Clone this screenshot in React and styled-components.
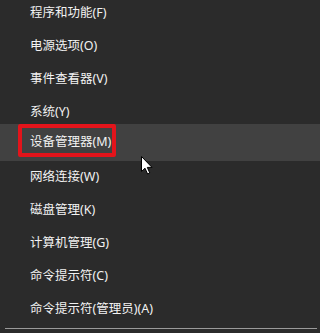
import React from "react";
import styled, { createGlobalStyle } from "styled-components";

const Global = createGlobalStyle`
  html, body { margin: 0; padding: 0; background: #2b2b2b; }
  body { overflow: hidden; }
`;

const Menu = styled.div`
  position: relative;
  width: 100%;
  height: 333px;
  background: #2b2b2b;
  display: flex;
  flex-direction: column;
  overflow: hidden;
  font-family: "Noto Sans", "Noto Sans CJK SC", sans-serif;
`;

const List = styled.ul`
  list-style: none;
  margin: -3px 0 0 0;
  padding: 0;
  display: flex;
  flex-direction: column;
`;

const Item = styled.li`
  height: ${(p) => (p.$hover ? 37 : 33)}px;
  margin-top: ${(p) => (p.$hover ? -5 : 0)}px;
  display: flex;
  align-items: ${(p) => (p.$hover ? "flex-start" : "center")};
  padding-left: ${(p) => (p.$hover ? 18 : 30)}px;
  background: ${(p) => (p.$hover ? "#414141" : "transparent")};
`;

const Label = styled.span`
  color: #f2f2f2;
  font-size: 12.5px;
  white-space: nowrap;
  line-height: 1;
`;

const Boxed = styled(Label)`
  display: flex;
  align-items: center;
  box-sizing: border-box;
  width: 98px;
  height: 33px;
  padding: 3px 0 0 8px;
  border: 4px solid #e3141b;
  border-radius: 2px;
`;

const Separator = styled.div`
  height: 1px;
  margin: 2px 3px 0 5px;
  background: #9a9a9a;
`;

const Cursor = styled.svg`
  position: absolute;
  left: 141px;
  top: 156px;
`;

const items = [
  "程序和功能(F)",
  "电源选项(O)",
  "事件查看器(V)",
  "系统(Y)",
  "设备管理器(M)",
  "网络连接(W)",
  "磁盘管理(K)",
  "计算机管理(G)",
  "命令提示符(C)",
  "命令提示符(管理员)(A)",
];

export default function App() {
  return (
    <>
      <Global />
      <Menu>
        <List>
          {items.map((t, i) =>
            i === 4 ? (
              <Item key={t} $hover>
                <Boxed>{t}</Boxed>
              </Item>
            ) : (
              <Item key={t}>
                <Label>{t}</Label>
              </Item>
            )
          )}
        </List>
        <Separator />
        <Cursor width="12" height="19" viewBox="0 0 12 19">
          <path
            d="M0.5 0.5 L0.5 15.5 L4 12.2 L6.6 18 L8.8 17 L6.3 11.4 L11 11.4 Z"
            fill="#ffffff"
            stroke="#000000"
            strokeWidth="1"
            strokeLinejoin="miter"
          />
        </Cursor>
      </Menu>
    </>
  );
}
